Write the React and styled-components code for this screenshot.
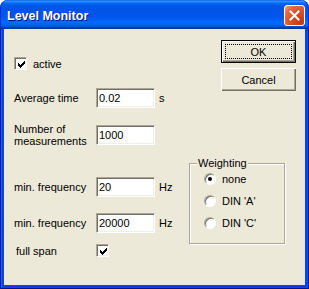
import React from 'react';
import styled, { createGlobalStyle } from 'styled-components';

const Global = createGlobalStyle`
  html, body { margin: 0; padding: 0; background: #fff; }
  body { font-family: "Liberation Sans", Arial, sans-serif; font-size: 11px; color: #000; }
  #root { width: 309px; height: 289px; }
`;

const Window = styled.div`
  width: 309px;
  height: 289px;
  display: flex;
  flex-direction: column;
`;

const TitleBar = styled.div`
  flex: none;
  height: 29px;
  box-sizing: border-box;
  display: flex;
  align-items: center;
  justify-content: space-between;
  padding: 2px 4px 0 7px;
  border-radius: 8px 8px 0 0;
  background: linear-gradient(
    to bottom,
    #0058ee 0%, #3593ff 4%, #288eff 6%, #127dff 8%, #036ffc 10%,
    #0262ee 14%, #0057e5 20%, #0054e3 24%, #0055eb 56%, #005bf5 66%,
    #026afe 76%, #0062ef 86%, #0052d6 92%, #0040ab 94%, #003092 100%
  );
  box-shadow: inset 1px 0 #0831d9, inset -1px 0 #0831d9;
`;

const Title = styled.span`
  font: bold 12.5px "Liberation Sans", Arial, sans-serif;
  color: #fff;
  text-shadow: 1px 1px #0f1089;
`;

const CloseButton = styled.button`
  width: 21px;
  height: 21px;
  padding: 0;
  margin: 0;
  border: 1px solid #fff;
  border-radius: 3px;
  display: flex;
  align-items: center;
  justify-content: center;
  background: radial-gradient(circle at 85% 85%, #c23a15 0%, #d84f27 45%, #e06a45 75%, #f0a489 100%);
`;

const Frame = styled.div`
  flex: 1;
  display: flex;
  padding: 0 4px 4px;
  background: #0842e0;
  box-shadow: inset 1px 0 #0019a8, inset -1px 0 #001ea0, inset 0 -1px #00138c, inset 2px 0 #1660f0, inset -2px 0 #0a4de8;
`;

const Content = styled.div`
  flex: 1;
  display: flex;
  background: #ece9d8;
`;

const LeftColumn = styled.div`
  width: 185px;
  box-sizing: border-box;
  padding-left: 10px;
  display: flex;
  flex-direction: column;
`;

const Row = styled.div`
  display: flex;
  align-items: center;
  height: ${p => p.$h}px;
  margin-top: ${p => p.$top}px;
`;

const Label = styled.div`
  width: ${p => 82 - (p.$indent || 0)}px;
  margin-left: ${p => p.$indent || 0}px;
  line-height: 12px;
`;

const CheckLabel = styled.span`
  margin-left: 6px;
`;

const TextInput = styled.input`
  width: 59px;
  height: 20px;
  box-sizing: border-box;
  margin: 0;
  padding: 0 0 0 2px;
  border: 1px solid;
  border-color: #aca899 #fff #fff #aca899;
  box-shadow: inset 1px 1px #716f64, inset -1px -1px #f1efe2;
  background: #fff;
  font: 11px "Liberation Sans", Arial, sans-serif;
  color: #000;
  outline: none;
`;

const Unit = styled.span`
  margin-left: 4px;
`;

const CheckBox = styled.span`
  width: 13px;
  height: 13px;
  box-sizing: border-box;
  flex: none;
  display: inline-block;
  border: 1px solid;
  border-color: #aca899 #fff #fff #aca899;
  box-shadow: inset 1px 1px #716f64, inset -1px -1px #f1efe2;
  background: #fff;
  position: relative;
  svg { position: absolute; left: 2px; top: 2px; }
`;

const RightColumn = styled.div`
  display: flex;
  flex-direction: column;
  padding-top: 11px;
`;

const Button = styled.button`
  position: relative;
  width: 75px;
  height: 23px;
  margin: 0 0 0 32px;
  padding: 0;
  box-sizing: border-box;
  background: #ece9d8;
  font: 11px "Liberation Sans", Arial, sans-serif;
  color: #000;
  border: ${p => (p.$default ? '1px solid #000' : 'none')};
  box-shadow: inset 1px 1px #fff, inset -1px -1px #716f64, inset -2px -2px #aca899;
  & + & { margin-top: 5px; }
`;

const Focus = styled.span`
  position: absolute;
  inset: 3px;
  border: 1px dotted #000;
`;

const GroupBox = styled.div`
  position: relative;
  width: 96px;
  height: 81px;
  box-sizing: border-box;
  margin-top: 72px;
  border: 1px solid #aca899;
  box-shadow: 1px 1px 0 #fff, inset 1px 1px 0 #fff;
  padding: 9px 0 0 14px;
  display: flex;
  flex-direction: column;
  gap: 10px;
`;

const Legend = styled.span`
  position: absolute;
  top: -7px;
  left: 7px;
  padding: 0 1px;
  background: #ece9d8;
  line-height: 13px;
`;

const RadioRow = styled.div`
  display: flex;
  align-items: center;
  height: 12px;
`;

const Radio = styled.span`
  width: 12px;
  height: 12px;
  box-sizing: border-box;
  border-radius: 50%;
  border: 1px solid;
  border-color: #aca899 #fff #fff #aca899;
  box-shadow: inset 1px 1px #716f64;
  background: #fff;
  display: flex;
  align-items: center;
  justify-content: center;
  &::after {
    content: '';
    width: 4px;
    height: 4px;
    border-radius: 50%;
    background: #000;
    display: ${p => (p.$checked ? 'block' : 'none')};
  }
`;

const RadioLabel = styled.span`
  margin-left: 6px;
`;

const checkPixels = [
  [6, 0], [5, 1], [6, 1], [0, 2], [4, 2], [5, 2], [6, 2],
  [0, 3], [1, 3], [3, 3], [4, 3], [5, 3],
  [0, 4], [1, 4], [2, 4], [3, 4], [4, 4],
  [1, 5], [2, 5], [3, 5], [2, 6],
];

const Check = () => (
  <svg width="9" height="9" viewBox="0 0 9 9" shapeRendering="crispEdges">
    {checkPixels.map(([x, y]) => (
      <rect key={`${x}-${y}`} x={x + 1} y={y + 1} width="1" height="1" fill="#000" />
    ))}
  </svg>
);

export default function App() {
  return (
    <>
      <Global />
      <Window>
        <TitleBar>
          <Title>Level Monitor</Title>
          <CloseButton aria-label="Close">
            <svg width="11" height="11" viewBox="0 0 11 11">
              <path d="M1.5 1.5 L9.5 9.5 M9.5 1.5 L1.5 9.5" stroke="#fff" strokeWidth="2" strokeLinecap="square" />
            </svg>
          </CloseButton>
        </TitleBar>
        <Frame>
          <Content>
            <LeftColumn>
              <Row $top={28} $h={13}>
                <CheckBox><Check /></CheckBox>
                <CheckLabel>active</CheckLabel>
              </Row>
              <Row $top={18} $h={20}>
                <Label>Average time</Label>
                <TextInput defaultValue="0.02" />
                <Unit>s</Unit>
              </Row>
              <Row $top={17} $h={20}>
                <Label>Number of<br />measurements</Label>
                <TextInput defaultValue="1000" />
              </Row>
              <Row $top={32} $h={20}>
                <Label>min. frequency</Label>
                <TextInput defaultValue="20" />
                <Unit>Hz</Unit>
              </Row>
              <Row $top={16} $h={20}>
                <Label>min. frequency</Label>
                <TextInput defaultValue="20000" />
                <Unit>Hz</Unit>
              </Row>
              <Row $top={11} $h={13}>
                <Label $indent={2}>full span</Label>
                <CheckBox><Check /></CheckBox>
              </Row>
            </LeftColumn>
            <RightColumn>
              <Button $default>OK<Focus /></Button>
              <Button>Cancel</Button>
              <GroupBox>
                <Legend>Weighting</Legend>
                <RadioRow><Radio $checked /><RadioLabel>none</RadioLabel></RadioRow>
                <RadioRow><Radio /><RadioLabel>DIN 'A'</RadioLabel></RadioRow>
                <RadioRow><Radio /><RadioLabel>DIN 'C'</RadioLabel></RadioRow>
              </GroupBox>
            </RightColumn>
          </Content>
        </Frame>
      </Window>
    </>
  );
}
